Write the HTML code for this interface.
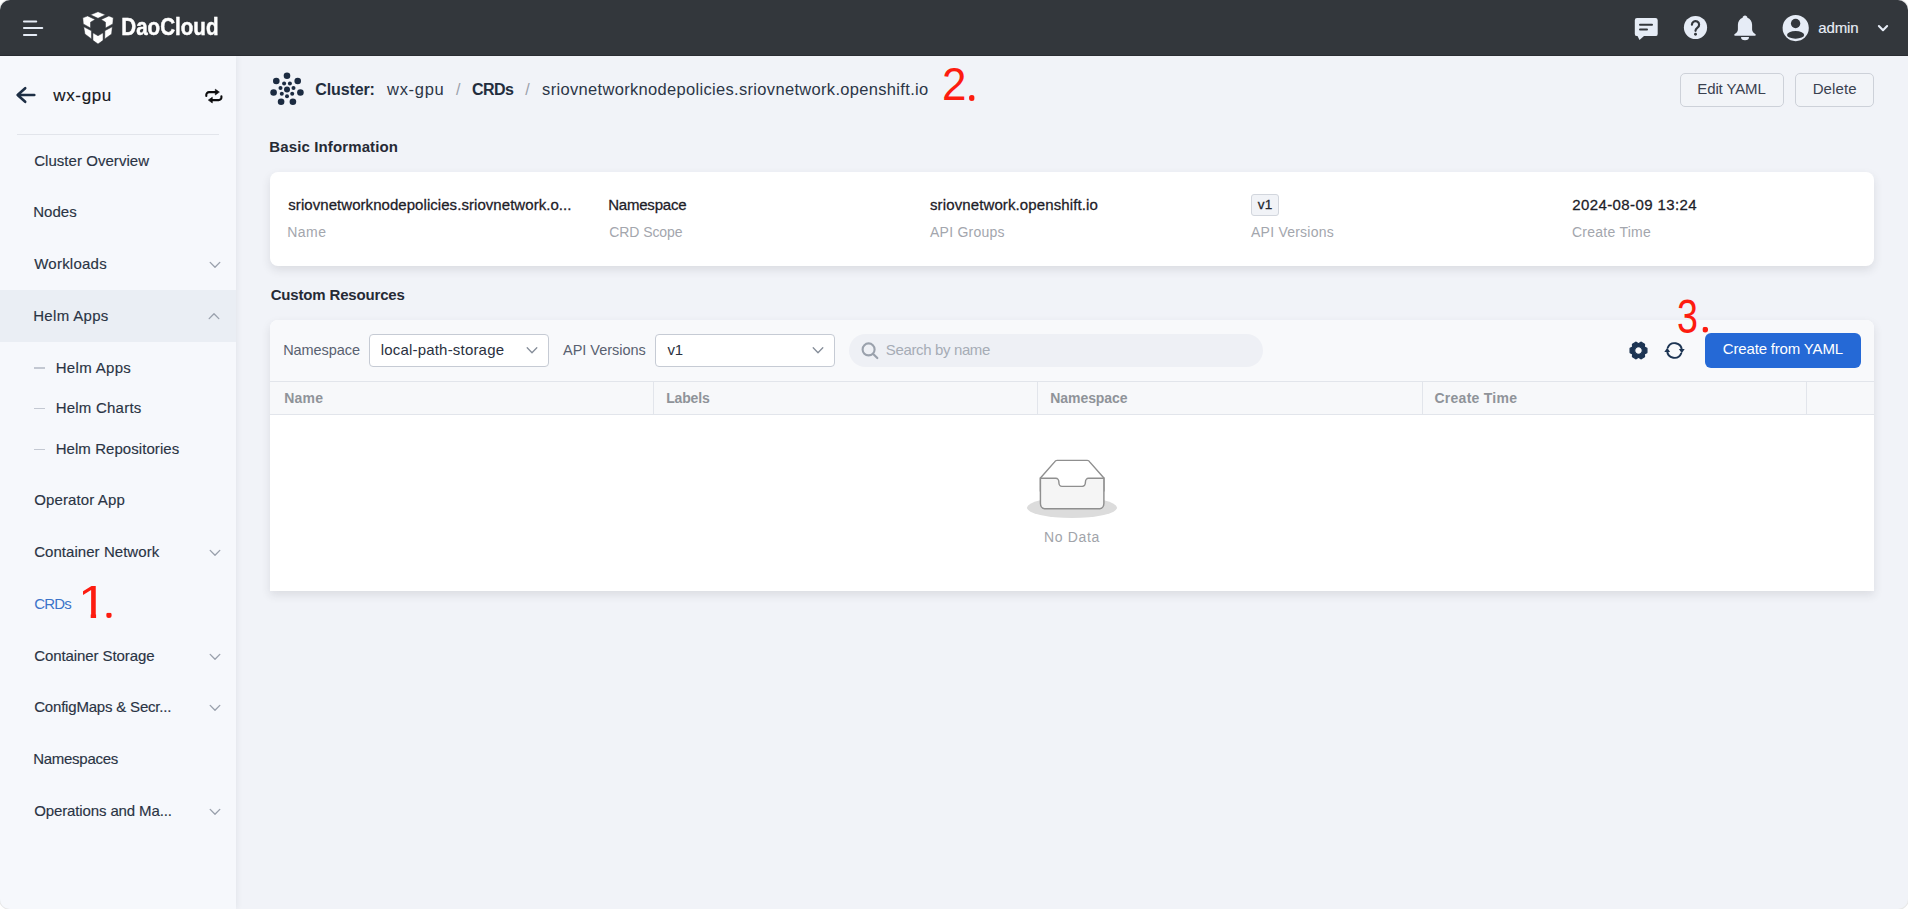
<!DOCTYPE html>
<html lang="en"><head><meta charset="utf-8"><title>CRD Detail - DaoCloud</title>
<style>
*{box-sizing:border-box;margin:0;padding:0}
html,body{width:1908px;height:909px;background:#fff;overflow:hidden}
body{font-family:"Liberation Sans",sans-serif;position:relative}
#app{position:absolute;left:0;top:0;width:1908px;height:909px;border-radius:10px;overflow:hidden;background:#f1f3f8;box-shadow:0 0 0 1px rgba(0,0,0,.09)}
.abs{position:absolute}
.t{position:absolute;line-height:1;white-space:pre}
#hdr{position:absolute;left:0;top:0;width:1908px;height:56px;background:#33373c;border-bottom:1px solid #2a2d32}
#side{position:absolute;left:0;top:56px;width:236px;height:853px;background:#f6f8fc;box-shadow:1px 0 6px rgba(30,40,60,.07)}
#side .div{position:absolute;left:17px;top:78px;width:202px;height:1px;background:#e2e5eb}
#side .act{position:absolute;left:0;top:234px;width:236px;height:52px;background:#eaeef4}
.dash{position:absolute;left:34px;width:11px;height:1.4px;background:#c3c8d2}
.card{position:absolute;left:270px;width:1604px;background:#fff}
#info{top:172px;height:94px;border-radius:8px;box-shadow:0 4px 10px rgba(40,44,55,.115)}
#tbl{top:320px;height:271px;border-radius:8px 8px 0 0;box-shadow:0 4px 10px rgba(40,44,55,.115);overflow:hidden}
#tbl .bar{position:absolute;left:0;top:0;width:100%;height:61px;background:#f8f9fb}
#tbl .th{position:absolute;left:0;top:61px;width:100%;height:34px;background:#f7f8fa;border-top:1px solid #e2e5eb;border-bottom:1px solid #e2e5eb}
.vsep{position:absolute;top:62px;width:1px;height:32px;background:#e2e5eb}
.sel{position:absolute;top:334px;height:33px;width:180px;border:1px solid #c6cbd4;border-radius:4px;background:#fff}
.btn{position:absolute;top:73px;height:34px;border:1px solid #cdd1d9;border-radius:5px;background:#f2f4f8}
#search{position:absolute;left:849px;top:334px;width:414px;height:33px;border-radius:17px;background:#eef0f5}
#create{position:absolute;left:1705px;top:333px;width:156px;height:35px;border-radius:6px;background:#2569d6}
#tag{position:absolute;left:1251px;top:194px;width:28px;height:22px;border:1px solid #d2d6dd;border-radius:3px;background:#f1f3f7}
svg{position:absolute;overflow:visible}

</style></head>
<body>
<div id="app">
  <div id="hdr">
    <!-- hamburger -->
    <svg style="left:0;top:0" width="60" height="56" viewBox="0 0 60 56"><g stroke="#e6ecf6" stroke-width="2.1" stroke-linecap="round"><path d="M24 21.5H36.2"/><path d="M24 28H42.2"/><path d="M24 35H36.2"/></g></svg>
    <!-- logo cube -->
    <svg style="left:0;top:0" width="130" height="56" viewBox="0 0 130 56"><g fill="#fff" stroke="#33373c" stroke-width="0.5" stroke-linejoin="miter">
      <polygon points="98,11.7 105.4,14.85 98,18.3 90.5,14.85"/>
      <polygon points="82.8,17.85 87.6,15.9 95.1,19.5 90.5,22.2 90.5,28 83.3,23.9"/>
      <polygon points="113.25,17.85 108.9,15.9 101.2,19.5 105.5,22.2 105.5,28 112.8,23.9"/>
      <polygon points="83.7,26.8 91.4,30.7 91.5,38.9 84.95,34.1"/>
      <polygon points="112.3,26.8 104.9,30.7 104.7,38.9 111.6,34.1"/>
      <polygon points="92.9,32.85 98,35.75 103.1,32.85 103.1,40.35 98,44 92.9,40.35"/>
    </g></svg>
    <svg style="left:118px;top:8px;will-change:transform" width="104" height="36" viewBox="0 0 104 36"><text x="3.3" y="26.8" font-family="Liberation Sans, sans-serif" font-weight="700" font-size="24.3" fill="#fff" stroke="#fff" stroke-width="0.5" textLength="97.2" lengthAdjust="spacingAndGlyphs">DaoCloud</text></svg>
    <!-- chat -->
    <svg style="left:1630px;top:12px" width="32" height="32" viewBox="0 0 32 32"><path fill="#e6ecf6" d="M7 6H25.5A2.2 2.2 0 0 1 27.7 8.2V21.9A2.2 2.2 0 0 1 25.5 24.1H14L9.500 28.100L7.500 24.100H7A2.2 2.2 0 0 1 4.8 21.9V8.2A2.2 2.2 0 0 1 7 6Z"/><path stroke="#33373c" stroke-width="2" stroke-linecap="round" d="M10 12.8H22"/><path stroke="#33373c" stroke-width="2" stroke-linecap="round" d="M10 17.6H17"/></svg>
    <!-- help -->
    <svg style="left:1683px;top:15px" width="25" height="25" viewBox="0 0 25 25"><circle cx="12.5" cy="12.5" r="11.6" fill="#e6ecf6"/><path d="M8.9 9.7a3.6 3.6 0 1 1 5.6 3c-1.2.9-2 1.6-2 3.1" fill="none" stroke="#33373c" stroke-width="2.2" stroke-linecap="round"/><circle cx="12.5" cy="19.3" r="1.45" fill="#33373c"/></svg>
    <!-- bell -->
    <svg style="left:1732px;top:13px" width="26" height="30" viewBox="0 0 26 30"><path fill="#e6ecf6" d="M13 2.600c-1.300 0-2.300 1-2.400 2.200C7.700 5.900 5.900 8.600 5.900 11.700v4.600c0 1.300-.5 2.500-1.500 3.400L2.500 21.300c-.6.500-.2 1.400.5 1.400H23c.7 0 1.100-.9.500-1.400L21.600 19.700c-1-.9-1.500-2.100-1.500-3.400V11.700c0-3.100-1.800-5.800-4.700-6.900C15.300 3.600 14.300 2.600 13 2.600Z"/><path fill="#e6ecf6" d="M9 23.900h8a4 3.300 0 0 1-8 0Z"/></svg>
    <!-- user -->
    <svg style="left:1782px;top:14px" width="28" height="28" viewBox="0 0 28 28"><circle cx="13.7" cy="14.1" r="13.1" fill="#e6ecf6"/><circle cx="13.6" cy="9.5" r="4.7" fill="#33373c"/><ellipse cx="13.6" cy="20.9" rx="8.6" ry="3.8" fill="#33373c"/></svg>
    <svg style="left:1874px;top:20px" width="18" height="16" viewBox="0 0 18 16"><path d="M4.900 6.100L9 10.200L13.100 6.100" fill="none" stroke="#e6ecf6" stroke-width="2.1" stroke-linecap="round" stroke-linejoin="round"/></svg>
  </div>

  <div id="side">
    <div class="div"></div>
    <div class="act"></div>
    <div class="dash" style="top:311.2px"></div>
    <div class="dash" style="top:351.6px"></div>
    <div class="dash" style="top:392.5px"></div>
    <!-- back arrow -->
    <svg style="left:10px;top:26px" width="32" height="28" viewBox="0 0 32 28"><path d="M24.300 13H8.400M15.200 6.200L7.600 13L15.200 19.800" fill="none" stroke="#1e2f45" stroke-width="2.6" stroke-linecap="round" stroke-linejoin="round"/></svg>
    <!-- swap icon -->
    <svg style="left:200px;top:28px" width="26" height="22" viewBox="0 0 26 22"><g fill="none" stroke="#0c0c0e" stroke-width="2.1" stroke-linecap="round" stroke-linejoin="round"><path d="M6.300 12V10.800A2.700 2.700 0 0 1 9 8.100H15.600"/><path d="M21.400 12.200V13.400A2.700 2.700 0 0 1 18.700 16.100H12.200"/></g><path fill="#0c0c0e" stroke="#0c0c0e" stroke-width=".6" stroke-linejoin="round" d="M15.300 5.200L19.400 8.100L15.300 11Z"/><path fill="#0c0c0e" stroke="#0c0c0e" stroke-width=".6" stroke-linejoin="round" d="M12.300 13.200L8.300 16.100L12.300 19Z"/></svg>
    <!-- chevrons -->
    <svg class="chv" style="left:207.8px;top:203.75px" width="14" height="10" viewBox="0 0 14 10"><path d="M2.200 2.400L7 7.300L11.800 2.400" fill="none" stroke="#9aa1ad" stroke-width="1.35" stroke-linecap="round" stroke-linejoin="round"/></svg>
    <svg class="chv" style="left:206.8px;top:255.05px" width="14" height="10" viewBox="0 0 14 10"><path d="M2.200 7.600L7 2.700L11.800 7.600" fill="none" stroke="#9aa1ad" stroke-width="1.35" stroke-linecap="round" stroke-linejoin="round"/></svg>
    <svg class="chv" style="left:207.8px;top:491.95px" width="14" height="10" viewBox="0 0 14 10"><path d="M2.200 2.400L7 7.300L11.800 2.400" fill="none" stroke="#9aa1ad" stroke-width="1.35" stroke-linecap="round" stroke-linejoin="round"/></svg>
    <svg class="chv" style="left:207.8px;top:595.85px" width="14" height="10" viewBox="0 0 14 10"><path d="M2.200 2.400L7 7.300L11.800 2.400" fill="none" stroke="#9aa1ad" stroke-width="1.35" stroke-linecap="round" stroke-linejoin="round"/></svg>
    <svg class="chv" style="left:207.8px;top:646.65px" width="14" height="10" viewBox="0 0 14 10"><path d="M2.200 2.400L7 7.300L11.800 2.400" fill="none" stroke="#9aa1ad" stroke-width="1.35" stroke-linecap="round" stroke-linejoin="round"/></svg>
    <svg class="chv" style="left:207.8px;top:750.85px" width="14" height="10" viewBox="0 0 14 10"><path d="M2.200 2.400L7 7.300L11.800 2.400" fill="none" stroke="#9aa1ad" stroke-width="1.35" stroke-linecap="round" stroke-linejoin="round"/></svg>
  </div>

  <!-- cluster icon -->
  <svg style="left:270px;top:72px" width="34" height="35" viewBox="0 0 34 35">
    <g fill="#1c2b41">
      <circle cx="17" cy="17.500" r="3"/>
      <circle cx="17" cy="3.800" r="3.300"/><circle cx="27.700" cy="9" r="3.300"/><circle cx="30.400" cy="20.500" r="3.300"/><circle cx="22.900" cy="29.800" r="3.300"/><circle cx="11.100" cy="29.800" r="3.300"/><circle cx="3.600" cy="20.500" r="3.300"/><circle cx="6.300" cy="9" r="3.300"/>
      <circle cx="17" cy="24.200" r="2"/><circle cx="22.200" cy="21.700" r="2"/><circle cx="23.500" cy="16" r="2"/><circle cx="19.900" cy="11.500" r="2"/><circle cx="14.100" cy="11.500" r="2"/><circle cx="10.500" cy="16" r="2"/><circle cx="11.800" cy="21.700" r="2"/>
    </g></svg>

  <div class="btn" style="left:1680px;width:104px"></div>
  <div class="btn" style="left:1795px;width:79px"></div>

  <div class="card" id="info"></div>
  <div id="tag"></div>

  <div class="card" id="tbl">
    <div class="bar"></div>
    <div class="th"></div>
    <div class="vsep" style="left:383px"></div>
    <div class="vsep" style="left:767px"></div>
    <div class="vsep" style="left:1152px"></div>
    <div class="vsep" style="left:1536px"></div>
  </div>
  <div class="sel" style="left:369px"></div>
  <div class="sel" style="left:655px"></div>
  <svg style="left:525px;top:345px" width="14" height="10" viewBox="0 0 14 10"><path d="M2.200 2.800L7 7.700L11.800 2.800" fill="none" stroke="#858d99" stroke-width="1.3" stroke-linecap="round" stroke-linejoin="round"/></svg>
  <svg style="left:811px;top:345px" width="14" height="10" viewBox="0 0 14 10"><path d="M2.200 2.800L7 7.700L11.800 2.800" fill="none" stroke="#858d99" stroke-width="1.3" stroke-linecap="round" stroke-linejoin="round"/></svg>
  <div id="search"></div>
  <svg style="left:860px;top:341px" width="20" height="20" viewBox="0 0 20 20"><circle cx="8.600" cy="8.400" r="6" fill="none" stroke="#9aa1ac" stroke-width="2.1"/><path d="M13.200 13L17.300 17" stroke="#9aa1ac" stroke-width="2.2" stroke-linecap="round"/></svg>
  <!-- gear -->
  <svg style="left:1628px;top:340px" width="21" height="21" viewBox="-10.500 -10.500 21 21"><path fill="#1d3553" stroke="#1d3553" stroke-width="1.2" stroke-linejoin="round" fill-rule="evenodd" d="M5.89 -3.40L8.44 -2.10L8.44 2.10L5.89 3.40L5.89 3.40L6.04 6.26L2.40 8.36L0.00 6.80L0.00 6.80L-2.40 8.36L-6.04 6.26L-5.89 3.40L-5.89 3.40L-8.44 2.10L-8.44 -2.10L-5.89 -3.40L-5.89 -3.40L-6.04 -6.26L-2.40 -8.36L-0.00 -6.80L-0.00 -6.80L2.40 -8.36L6.04 -6.26L5.89 -3.40ZM3.8 0A3.8 3.8 0 1 0 -3.8 0A3.8 3.8 0 1 0 3.8 0Z"/></svg>
  <!-- refresh -->
  <svg style="left:1663px;top:339px" width="23" height="23" viewBox="-11.500 -11.500 23 23"><g fill="none" stroke="#1d3553" stroke-width="1.95" stroke-linecap="round"><path d="M-6.700 -2.900A7.300 7.300 0 0 1 7.300 -.4"/><path d="M6.700 2.900A7.300 7.300 0 0 1 -7.300 .4"/></g><path fill="#1d3553" d="M4.400 -1.600L10.200 -1.600L7.300 2.800Z"/><path fill="#1d3553" d="M-4.400 1.600L-10.200 1.600L-7.300 -2.800Z"/></svg>
  <div id="create"></div>

  <!-- empty -->
  <svg style="left:1020px;top:490px" width="104" height="36" viewBox="1020 490 104 36"><ellipse fill="#dcdcdc" cx="1072" cy="507.7" rx="45" ry="10.4"/></svg>
  <svg style="left:1027.84px;top:458.600px" width="88.320" height="56.580" viewBox="0 0 64 41"><g transform="translate(0 1)" fill="none" fill-rule="evenodd"><g fill-rule="nonzero" stroke="#8f8f8f" stroke-width="1.050"><path fill="#fff" d="M55 12.760L44.854 1.258C44.367.474 43.656 0 42.907 0H21.093c-.749 0-1.460.474-1.947 1.257L9 12.761V22h46v-9.240z"/><path d="M41.613 15.931c0-1.605.994-2.930 2.227-2.931H55v18.137C55 33.260 53.680 35 52.050 35h-40.100C10.320 35 9 33.259 9 31.137V13h11.160c1.233 0 2.227 1.323 2.227 2.928v.022c0 1.605 1.005 2.901 2.237 2.901h14.752c1.232 0 2.237-1.308 2.237-2.913v-.007z" fill="#f5f5f5"/></g></g></svg>

<span class="t" style="left:1818.30px;top:20.30px;font-size:15px;font-weight:400;color:#e9eef7;letter-spacing:-0.153px;-webkit-text-stroke:0.15px #e9eef7">admin</span>
<span class="t" style="left:53.30px;top:86.81px;font-size:17px;font-weight:400;color:#16181d;letter-spacing:0.631px;-webkit-text-stroke:0.15px #16181d">wx-gpu</span>
<span class="t" style="left:34.20px;top:153.30px;font-size:15px;font-weight:400;color:#2a3444;letter-spacing:0.043px;-webkit-text-stroke:0.15px #2a3444">Cluster Overview</span>
<span class="t" style="left:33.20px;top:204.30px;font-size:15px;font-weight:400;color:#2a3444;letter-spacing:0.035px;-webkit-text-stroke:0.15px #2a3444">Nodes</span>
<span class="t" style="left:34.20px;top:256.30px;font-size:15px;font-weight:400;color:#2a3444;letter-spacing:0.240px;-webkit-text-stroke:0.15px #2a3444">Workloads</span>
<span class="t" style="left:33.20px;top:308.30px;font-size:15px;font-weight:400;color:#2a3444;letter-spacing:0.330px;-webkit-text-stroke:0.15px #2a3444">Helm Apps</span>
<span class="t" style="left:55.70px;top:360.30px;font-size:15px;font-weight:400;color:#2a3444;letter-spacing:0.330px;-webkit-text-stroke:0.15px #2a3444">Helm Apps</span>
<span class="t" style="left:55.70px;top:400.20px;font-size:15px;font-weight:400;color:#2a3444;letter-spacing:0.225px;-webkit-text-stroke:0.15px #2a3444">Helm Charts</span>
<span class="t" style="left:55.70px;top:441.10px;font-size:15px;font-weight:400;color:#2a3444;letter-spacing:0.060px;-webkit-text-stroke:0.15px #2a3444">Helm Repositories</span>
<span class="t" style="left:34.20px;top:492.30px;font-size:15px;font-weight:400;color:#2a3444;letter-spacing:0.126px;-webkit-text-stroke:0.15px #2a3444">Operator App</span>
<span class="t" style="left:34.20px;top:544.30px;font-size:15px;font-weight:400;color:#2a3444;letter-spacing:0.049px;-webkit-text-stroke:0.15px #2a3444">Container Network</span>
<span class="t" style="left:34.20px;top:596.10px;font-size:15px;font-weight:400;color:#3b74c9;letter-spacing:-0.799px">CRDs</span>
<span class="t" style="left:34.20px;top:648.30px;font-size:15px;font-weight:400;color:#2a3444;letter-spacing:-0.088px;-webkit-text-stroke:0.15px #2a3444">Container Storage</span>
<span class="t" style="left:34.20px;top:699.20px;font-size:15px;font-weight:400;color:#2a3444;letter-spacing:-0.191px;-webkit-text-stroke:0.15px #2a3444">ConfigMaps &amp; Secr...</span>
<span class="t" style="left:33.20px;top:751.10px;font-size:15px;font-weight:400;color:#2a3444;letter-spacing:-0.271px;-webkit-text-stroke:0.15px #2a3444">Namespaces</span>
<span class="t" style="left:34.20px;top:803.10px;font-size:15px;font-weight:400;color:#2a3444;letter-spacing:-0.121px;-webkit-text-stroke:0.15px #2a3444">Operations and Ma...</span>
<span class="t" style="left:77.54px;top:579.08px;font-size:46.8px;font-weight:400;color:#fd1c10;letter-spacing:0.000px;transform:scaleX(1.116);transform-origin:0 0;clip-path:polygon(0 0,100% 0,100% 34.7px,16.2px 34.7px,16.2px 100%,11.4px 100%,11.4px 34.7px,0 34.7px)">1</span>
<span class="t" style="left:100.90px;top:569.50px;font-size:58px;font-weight:400;color:#fd1c10;letter-spacing:0.000px;clip-path:circle(2.90px at 8.00px 45.60px)">.</span>
<span class="t" style="left:942.33px;top:60.21px;font-size:47px;font-weight:400;color:#fd1c10;letter-spacing:0.000px;transform:scaleX(0.936);transform-origin:0 0">2</span>
<span class="t" style="left:963.80px;top:52.40px;font-size:58px;font-weight:400;color:#fd1c10;letter-spacing:0.000px;clip-path:circle(2.90px at 8.00px 45.60px)">.</span>
<span class="t" style="left:1677.00px;top:292.78px;font-size:47.4px;font-weight:400;color:#fd1c10;letter-spacing:0.000px;transform:scaleX(0.796);transform-origin:0 0">3</span>
<span class="t" style="left:1697.20px;top:284.00px;font-size:58px;font-weight:400;color:#fd1c10;letter-spacing:0.000px;clip-path:circle(2.90px at 8.00px 45.60px)">.</span>
<span class="t" style="left:315.30px;top:81.66px;font-size:16px;font-weight:700;color:#232d3d;letter-spacing:-0.132px">Cluster:</span>
<span class="t" style="left:387.00px;top:81.23px;font-size:16.5px;font-weight:400;color:#2c3647;letter-spacing:0.717px">wx-gpu</span>
<span class="t" style="left:456.00px;top:81.66px;font-size:16px;font-weight:400;color:#9aa0aa;letter-spacing:0.000px">/</span>
<span class="t" style="left:472.00px;top:81.66px;font-size:16px;font-weight:700;color:#232d3d;letter-spacing:-0.555px">CRDs</span>
<span class="t" style="left:525.30px;top:81.66px;font-size:16px;font-weight:400;color:#9aa0aa;letter-spacing:0.000px">/</span>
<span class="t" style="left:542.10px;top:81.23px;font-size:16.5px;font-weight:400;color:#2c3647;letter-spacing:0.318px">sriovnetworknodepolicies.sriovnetwork.openshift.io</span>
<span class="t" style="left:1697.30px;top:81.20px;font-size:15px;font-weight:400;color:#3a4150;letter-spacing:-0.126px">Edit YAML</span>
<span class="t" style="left:1812.70px;top:81.20px;font-size:15px;font-weight:400;color:#3a4150;letter-spacing:0.097px">Delete</span>
<span class="t" style="left:269.30px;top:139.30px;font-size:15px;font-weight:700;color:#262a35;letter-spacing:0.123px">Basic Information</span>
<span class="t" style="left:270.70px;top:287.30px;font-size:15px;font-weight:700;color:#262a35;letter-spacing:-0.171px">Custom Resources</span>
<span class="t" style="left:288.30px;top:197.30px;font-size:15px;font-weight:400;color:#1d2027;letter-spacing:0.054px;-webkit-text-stroke:0.27px #1d2027">sriovnetworknodepolicies.sriovnetwork.o...</span>
<span class="t" style="left:287.30px;top:225.15px;font-size:14px;font-weight:400;color:#a3a6ad;letter-spacing:0.447px">Name</span>
<span class="t" style="left:608.20px;top:197.30px;font-size:15px;font-weight:400;color:#1d2027;letter-spacing:-0.212px;-webkit-text-stroke:0.27px #1d2027">Namespace</span>
<span class="t" style="left:609.20px;top:225.15px;font-size:14px;font-weight:400;color:#a3a6ad;letter-spacing:-0.066px">CRD Scope</span>
<span class="t" style="left:930.00px;top:197.30px;font-size:15px;font-weight:400;color:#1d2027;letter-spacing:0.115px;-webkit-text-stroke:0.27px #1d2027">sriovnetwork.openshift.io</span>
<span class="t" style="left:930.00px;top:225.15px;font-size:14px;font-weight:400;color:#a3a6ad;letter-spacing:0.237px">API Groups</span>
<span class="t" style="left:1257.80px;top:197.77px;font-size:13.5px;font-weight:400;color:#23272f;letter-spacing:0.150px;-webkit-text-stroke:0.27px #23272f">v1</span>
<span class="t" style="left:1251.00px;top:225.15px;font-size:14px;font-weight:400;color:#a3a6ad;letter-spacing:0.232px">API Versions</span>
<span class="t" style="left:1572.20px;top:197.30px;font-size:15px;font-weight:400;color:#1d2027;letter-spacing:0.401px;-webkit-text-stroke:0.27px #1d2027">2024-08-09 13:24</span>
<span class="t" style="left:1572.00px;top:225.15px;font-size:14px;font-weight:400;color:#a3a6ad;letter-spacing:0.249px">Create Time</span>
<span class="t" style="left:283.20px;top:343.03px;font-size:14.5px;font-weight:400;color:#596170;letter-spacing:-0.063px">Namespace</span>
<span class="t" style="left:380.70px;top:342.10px;font-size:15px;font-weight:400;color:#2a3140;letter-spacing:0.193px">local-path-storage</span>
<span class="t" style="left:563.00px;top:343.03px;font-size:14.5px;font-weight:400;color:#596170;letter-spacing:-0.024px">API Versions</span>
<span class="t" style="left:667.50px;top:342.10px;font-size:15px;font-weight:400;color:#2a3140;letter-spacing:-0.200px">v1</span>
<span class="t" style="left:885.80px;top:342.30px;font-size:15px;font-weight:400;color:#a6acb5;letter-spacing:-0.360px">Search by name</span>
<span class="t" style="left:1722.80px;top:341.30px;font-size:15px;font-weight:400;color:#ffffff;letter-spacing:-0.170px">Create from YAML</span>
<span class="t" style="left:284.20px;top:390.95px;font-size:14px;font-weight:700;color:#8f9399;letter-spacing:0.218px">Name</span>
<span class="t" style="left:666.20px;top:390.95px;font-size:14px;font-weight:700;color:#8f9399;letter-spacing:-0.153px">Labels</span>
<span class="t" style="left:1050.30px;top:390.95px;font-size:14px;font-weight:700;color:#8f9399;letter-spacing:-0.068px">Namespace</span>
<span class="t" style="left:1434.50px;top:390.95px;font-size:14px;font-weight:700;color:#8f9399;letter-spacing:0.259px">Create Time</span>
<span class="t" style="left:1044.00px;top:530.05px;font-size:14px;font-weight:400;color:#a1a4aa;letter-spacing:0.655px">No Data</span>
</div>

</body></html>
